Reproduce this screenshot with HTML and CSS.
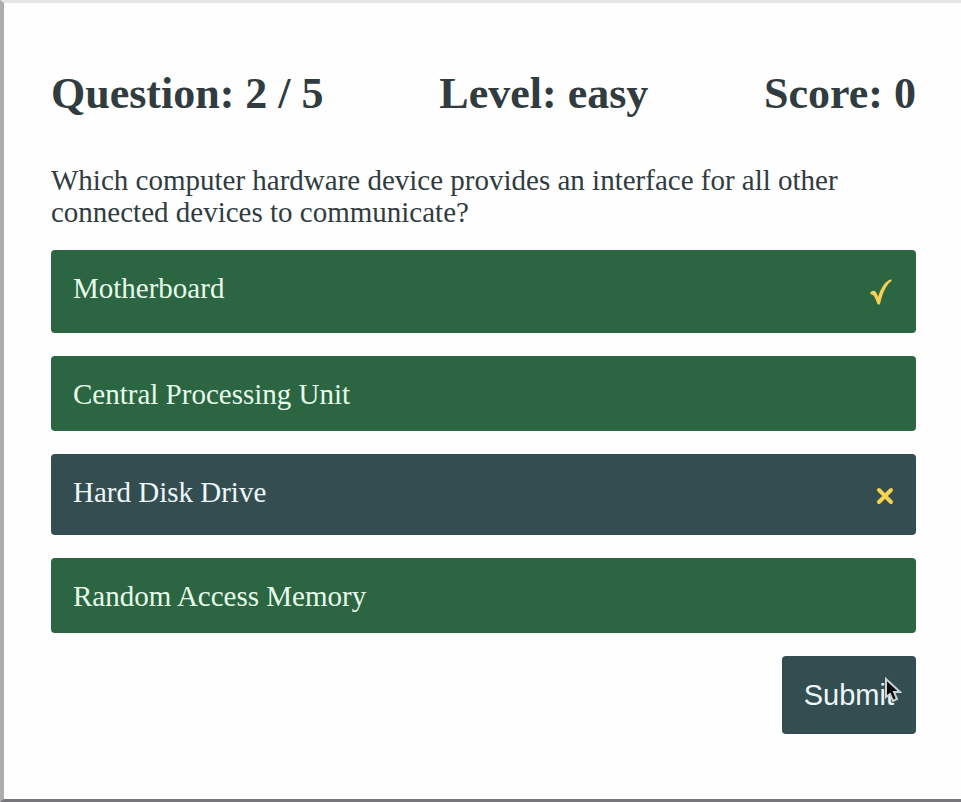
FILE: index.html
```html
<!DOCTYPE html>
<html lang="en">
<head>
<meta charset="utf-8">
<title>Quiz</title>
<link rel="stylesheet" href="styles.css">
</head>
<body>
<main class="quiz">
  <header class="status">
    <h2>Question: 2 / 5</h2>
    <h2>Level: easy</h2>
    <h2>Score: 0</h2>
  </header>
  <p class="question">Which computer hardware device provides an interface for all other connected devices to communicate?</p>
  <div class="options">
    <button type="button" class="option marked-right"><span>Motherboard</span>
      <svg class="tick" viewBox="0 0 22 26" aria-hidden="true"><path d="M0 14 Q2 11 5 12 Q7 14 8 18 Q12 5 19 1 Q21 0 22 1 Q21 3 19 4 Q13 11 10 25 Q8 27 7 24 Q5 18 3 16 Q1 16 0 14Z"/></svg>
    </button>
    <button type="button" class="option"><span>Central Processing Unit</span></button>
    <button type="button" class="option marked-wrong"><span>Hard Disk Drive</span>
      <svg class="cross" viewBox="0 0 18 18" aria-hidden="true"><path d="M3 3 L15 15 M15 3 L3 15"/></svg>
    </button>
    <button type="button" class="option"><span>Random Access Memory</span></button>
  </div>
  <button type="button" class="submit">Submit
    <svg class="pointer" viewBox="0 0 18 26" aria-hidden="true"><path d="M2 2 V20 L6 17 L9 24 L13 22 L10 15 H16Z"/></svg>
  </button>
</main>
</body>
</html>
```
FILE: styles.css
```css
* {
  box-sizing: border-box;
}

body {
  margin: 0;
  min-height: 100vh;
  display: flex;
  background: #fefefe;
  color: #303c3f;
  font-family: "Liberation Serif", "Times New Roman", serif;
  font-size: 29px;
  line-height: 32px;
}

.quiz {
  flex: 1;
  display: flex;
  flex-direction: column;
  padding: 64px 45px 0 47px;
  border-top: 3px solid #e6e6e6;
  border-left: 4px solid #adadad;
  border-bottom: 3px solid #77777a;
}

.status {
  display: flex;
  justify-content: space-between;
}

h2 {
  margin: 0;
  font-size: 44px;
  line-height: 54px;
}

.question {
  margin: 43px 0 22px;
}

.options {
  display: flex;
  flex-direction: column;
  gap: 23px;
}

.option,
.submit {
  border: 0;
  border-radius: 4px;
  color: #e6fbe9;
  font: inherit;
}

.option {
  display: flex;
  justify-content: space-between;
  align-items: flex-start;
  min-height: 75px;
  padding: 22px 22px 21px;
  background: #2c6542;
  text-align: left;
}

.marked-right {
  min-height: 83px;
}

.marked-wrong {
  min-height: 81px;
  background: #344d50;
  color: #eef8fa;
}

.tick {
  width: 22px;
  height: 26px;
  margin-top: 7px;
  margin-right: 2px;
  fill: #f6cf55;
}

.cross {
  width: 18px;
  height: 18px;
  margin-top: 11px;
  fill: none;
  stroke: #f6d04f;
  stroke-width: 4;
  stroke-linecap: round;
}

.submit {
  position: relative;
  align-self: flex-end;
  margin-top: 23px;
  padding: 23px 22px;
  background: #344d50;
  color: #eef8fa;
  font-family: "Liberation Sans", Arial, sans-serif;
}

.pointer {
  position: absolute;
  top: 21px;
  right: 14px;
  width: 18px;
  height: 26px;
  fill: #090b0e;
  stroke: #c9d2d4;
  stroke-width: 2;
}
```
